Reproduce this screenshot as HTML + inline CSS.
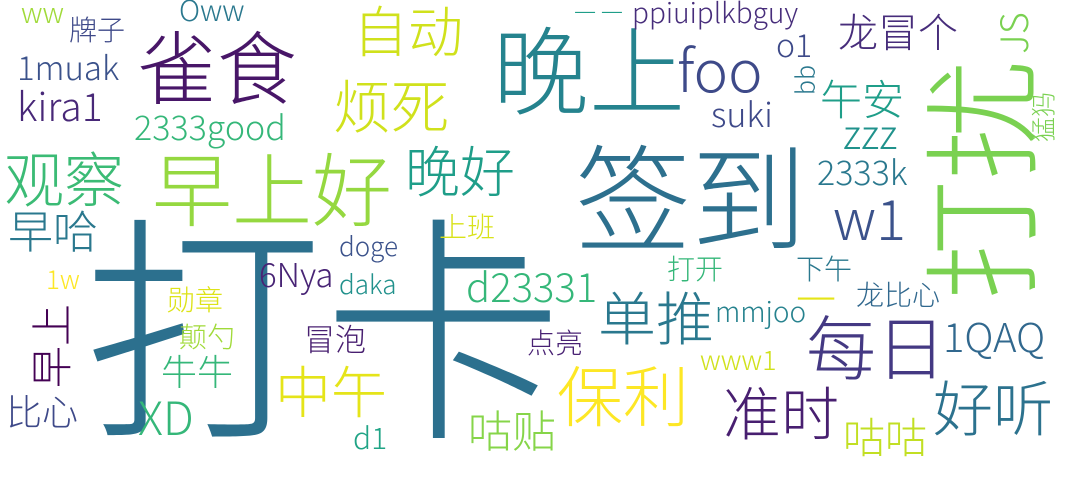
<!DOCTYPE html>
<html><head><meta charset="utf-8">
<style>
html,body{margin:0;padding:0;background:#fff;}
body{width:1080px;height:463px;position:relative;overflow:hidden;}
.w{position:absolute;line-height:1;white-space:nowrap;font-family:"Noto Sans CJK SC","Liberation Sans",sans-serif;font-weight:300;}
.r{position:absolute;line-height:1;white-space:nowrap;font-family:"Noto Sans CJK SC","Liberation Sans",sans-serif;font-weight:300;transform:translate(-50%,-50%) rotate(-90deg);}
</style></head><body>
<div class="w" style="left:83px;top:197px;font-size:240px;color:#2c708e">打卡</div>
<div class="w" style="left:575px;top:134px;font-size:116px;color:#2d708e">签到</div>
<div class="r" style="left:975px;top:180px;font-size:120px;color:#7ad151">打扰</div>
<div class="w" style="left:493px;top:18px;font-size:96px;color:#25838e">晚上</div>
<div class="w" style="left:137px;top:24px;font-size:80px;color:#481668">雀食</div>
<div class="w" style="left:152px;top:146px;font-size:80px;color:#95d840">早上好</div>
<div class="w" style="left:4px;top:147px;font-size:60px;color:#3bbb75">观察</div>
<div class="w" style="left:353px;top:1px;font-size:55px;color:#d0e11c">自动</div>
<div class="w" style="left:333px;top:74px;font-size:58px;color:#d0e11c">烦死</div>
<div class="w" style="left:405px;top:141px;font-size:55px;color:#1f9e89">晚好</div>
<div class="w" style="left:677px;top:38px;font-size:58px;color:#3e4a89">foo</div>
<div class="w" style="left:17px;top:86px;font-size:39px;color:#482878">kira1</div>
<div class="w" style="left:17px;top:50px;font-size:33px;color:#3b528b">1muak</div>
<div class="w" style="left:134px;top:109px;font-size:34px;color:#35b779">2333good</div>
<div class="w" style="left:8px;top:206px;font-size:45px;color:#2a788e">早哈</div>
<div class="w" style="left:179px;top:-5px;font-size:29px;color:#2a788e">Oww</div>
<div class="w" style="left:21px;top:-2px;font-size:28px;color:#a0da39">ww</div>
<div class="w" style="left:69px;top:15px;font-size:28px;color:#3e4989">牌子</div>
<div class="w" style="left:574px;top:1px;font-size:22px;color:#1f9e89">一 一</div>
<div class="w" style="left:632px;top:-2px;font-size:28px;color:#472d7b">ppiuiplkbguy</div>
<div class="w" style="left:838px;top:10px;font-size:40px;color:#472d7b">龙冒个</div>
<div class="r" style="left:1012px;top:33px;font-size:38px;color:#7ad151">JS</div>
<div class="w" style="left:776px;top:28px;font-size:32px;color:#3e4a89">o1</div>
<div class="r" style="left:805px;top:80px;font-size:25px;color:#2a788e">bb</div>
<div class="w" style="left:820px;top:77px;font-size:42px;color:#1f9e89">午安</div>
<div class="w" style="left:711px;top:96px;font-size:34px;color:#3e4989">suki</div>
<div class="w" style="left:843px;top:112px;font-size:40px;color:#20928c">zzz</div>
<div class="w" style="left:817px;top:154px;font-size:34px;color:#2a788e">2333k</div>
<div class="r" style="left:1043px;top:117px;font-size:25px;color:#7ad151">猛犸</div>
<div class="w" style="left:833px;top:189px;font-size:56px;color:#3b528b">w1</div>
<div class="w" style="left:806px;top:310px;font-size:70px;color:#443983">每日</div>
<div class="w" style="left:598px;top:286px;font-size:58px;color:#2a788e">单推</div>
<div class="w" style="left:943px;top:315px;font-size:40px;color:#31688e">1QAQ</div>
<div class="w" style="left:933px;top:376px;font-size:60px;color:#2c728e">好听</div>
<div class="w" style="left:723px;top:381px;font-size:58px;color:#481f70">准时</div>
<div class="w" style="left:843px;top:415px;font-size:42px;color:#c2df23">咕咕</div>
<div class="w" style="left:557px;top:360px;font-size:66px;color:#fde725">保利</div>
<div class="w" style="left:468px;top:406px;font-size:44px;color:#86d549">咕贴</div>
<div class="w" style="left:275px;top:362px;font-size:56px;color:#e5e419">中午</div>
<div class="w" style="left:138px;top:393px;font-size:46px;color:#35b779">XD</div>
<div class="w" style="left:353px;top:421px;font-size:30px;color:#20a486">d1</div>
<div class="w" style="left:161px;top:352px;font-size:36px;color:#35b779">牛牛</div>
<div class="w" style="left:179px;top:322px;font-size:28px;color:#a0da39">颠勺</div>
<div class="w" style="left:167px;top:285px;font-size:28px;color:#dde318">勋章</div>
<div class="w" style="left:46px;top:266px;font-size:26px;color:#fde725">1w</div>
<div class="r" style="left:50px;top:346px;font-size:42px;color:#440154">早上</div>
<div class="w" style="left:6px;top:392px;font-size:36px;color:#3e4989">比心</div>
<div class="w" style="left:259px;top:257px;font-size:33px;color:#482475">6Nya</div>
<div class="w" style="left:339px;top:233px;font-size:26px;color:#3b528b">doge</div>
<div class="w" style="left:339px;top:271px;font-size:26px;color:#21918c">daka</div>
<div class="w" style="left:466px;top:265px;font-size:40px;color:#35b779">d23331</div>
<div class="w" style="left:439px;top:212px;font-size:28px;color:#d8e219">上班</div>
<div class="w" style="left:527px;top:328px;font-size:28px;color:#482173">点亮</div>
<div class="w" style="left:304px;top:322px;font-size:31px;color:#481f70">冒泡</div>
<div class="w" style="left:700px;top:345px;font-size:27px;color:#d0e11c">www1</div>
<div class="w" style="left:715px;top:297px;font-size:28px;color:#26828e">mmjoo</div>
<div class="w" style="left:667px;top:254px;font-size:28px;color:#35b779">打开</div>
<div class="w" style="left:796px;top:254px;font-size:28px;color:#2a788e">下午</div>
<div class="w" style="left:796px;top:277px;font-size:40px;color:#e5e419">一</div>
<div class="w" style="left:856px;top:280px;font-size:28px;color:#31688e">龙比心</div>
</body></html>
